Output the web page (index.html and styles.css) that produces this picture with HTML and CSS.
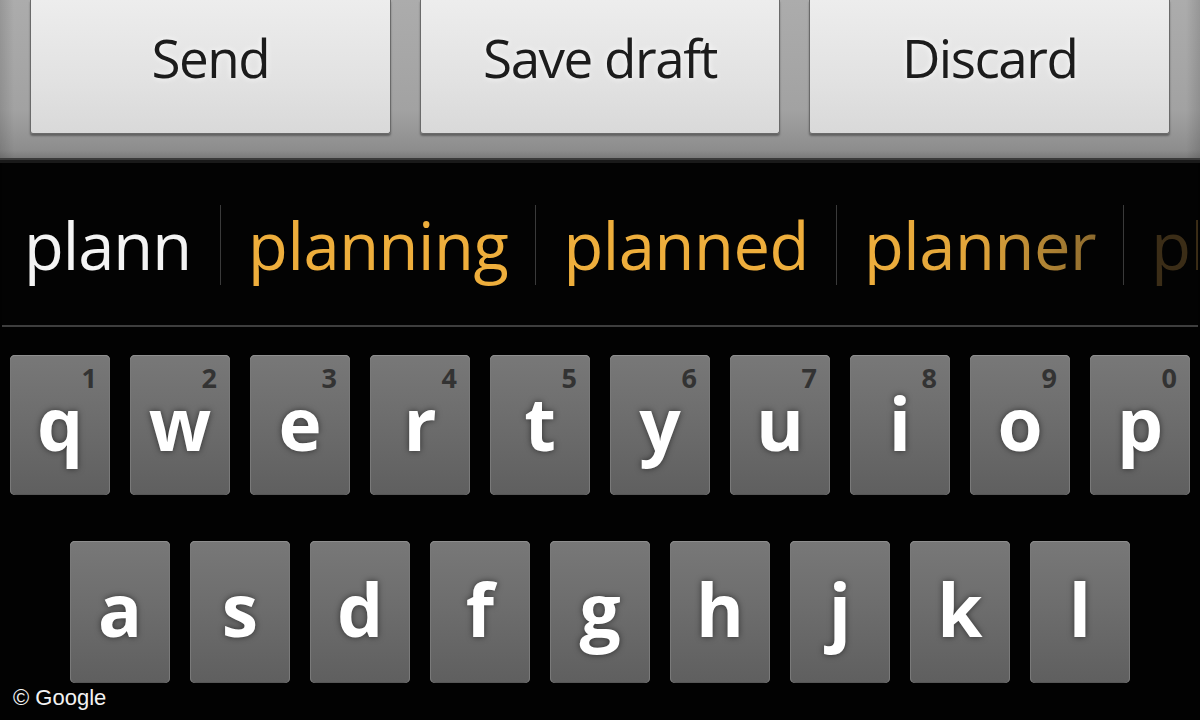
FILE: index.html
```html
<!DOCTYPE html>
<html>
<head>
<meta charset="utf-8">
<link rel="stylesheet" href="styles.css">
</head>
<body>
<div class="screen">
  <div class="actionbar">
    <div class="btn">Send</div>
    <div class="btn">Save draft</div>
    <div class="btn">Discard</div>
  </div>
  <div class="strip">
    <div class="word typed">plann</div>
    <div class="word sugg">planning</div>
    <div class="word sugg">planned</div>
    <div class="word sugg fade">planner</div>
    <div class="word sugg dim">pl</div>
  </div>
  <div class="keyboard">
    <div class="row row1">
      <div class="key"><span class="num">1</span><span class="ch">q</span></div>
      <div class="key"><span class="num">2</span><span class="ch">w</span></div>
      <div class="key"><span class="num">3</span><span class="ch">e</span></div>
      <div class="key"><span class="num">4</span><span class="ch">r</span></div>
      <div class="key"><span class="num">5</span><span class="ch">t</span></div>
      <div class="key"><span class="num">6</span><span class="ch">y</span></div>
      <div class="key"><span class="num">7</span><span class="ch">u</span></div>
      <div class="key"><span class="num">8</span><span class="ch">i</span></div>
      <div class="key"><span class="num">9</span><span class="ch">o</span></div>
      <div class="key"><span class="num">0</span><span class="ch">p</span></div>
    </div>
    <div class="row row2">
      <div class="key"><span class="num"></span><span class="ch">a</span></div>
      <div class="key"><span class="num"></span><span class="ch">s</span></div>
      <div class="key"><span class="num"></span><span class="ch">d</span></div>
      <div class="key"><span class="num"></span><span class="ch">f</span></div>
      <div class="key"><span class="num"></span><span class="ch">g</span></div>
      <div class="key"><span class="num"></span><span class="ch">h</span></div>
      <div class="key"><span class="num"></span><span class="ch">j</span></div>
      <div class="key"><span class="num"></span><span class="ch">k</span></div>
      <div class="key"><span class="num"></span><span class="ch">l</span></div>
    </div>
  </div>
  <div class="credit">© Google</div>
</div>
</body>
</html>
```

FILE: styles.css
```css
* { box-sizing: border-box; }
html, body {
  margin: 0;
  padding: 0;
  background: #000;
}
.screen {
  position: relative;
  width: 1200px;
  height: 720px;
  overflow: hidden;
  background: #020202;
  font-family: "Open Sans", "DejaVu Sans", sans-serif;
}
.actionbar {
  height: 163px;
  display: grid;
  grid-template-columns: repeat(3, 1fr);
  column-gap: 29px;
  padding: 0 30px;
  background: linear-gradient(90deg, rgba(0,0,0,0.12) 0, rgba(0,0,0,0) 14px, rgba(0,0,0,0) 1186px, rgba(0,0,0,0.12) 100%),
              linear-gradient(#acacac 0, #a2a2a2 110px, #8d8d8d 150px, #7a7a7a 158px);
  border-bottom: 3px solid #1a1a1a;
  box-shadow: 0 -2px 0 #3a3a3a inset;
}
.btn {
  height: 134px;
  display: flex;
  align-items: center;
  justify-content: center;
  padding-bottom: 18px;
  background: linear-gradient(#ededed, #e2e2e2 60%, #d9d9d9);
  border: 1px solid #6a6a6a;
  border-top: none;
  border-radius: 0 0 3px 3px;
  box-shadow: 0 2px 2px rgba(0,0,0,0.35);
  color: #1c1c1c;
  font-size: 53px;
  letter-spacing: -1.5px;
  text-shadow: 0 0 6px rgba(255,255,255,0.9);
}
.strip {
  height: 164px;
  display: flex;
  align-items: flex-start;
  padding-top: 42px;
  overflow: hidden;
  white-space: nowrap;
  border-bottom: 2px solid #3e3e3e;
  margin: 0 2px;
  background: #030303;
}
.word {
  height: 80px;
  line-height: 80px;
  font-size: 65px;
  letter-spacing: -0.4px;
  padding: 0 27px;
  border-left: 1px solid #3a3a3a;
  flex: none;
}
.word.typed {
  color: #f4f4f4;
  border-left: none;
  letter-spacing: -1px;
  padding-left: 22px;
  padding-right: 29px;
}
.sugg { color: #eeae3c; }
.sugg.fade {
  background: linear-gradient(90deg, #eeae3c 0, #e0a43a 50%, #8c6a2e 100%);
  -webkit-background-clip: text;
  background-clip: text;
  color: transparent;
  background-origin: content-box;
  background-size: 100% 100%;
  background-repeat: no-repeat;
}
.sugg.dim { color: #3b2d17; }
.keyboard {
  padding-top: 28px;
  display: flex;
  flex-direction: column;
  row-gap: 46px;
}
.row {
  display: flex;
  column-gap: 20px;
}
.row1 { padding-left: 10px; }
.row2 { padding-left: 70px; }
.row2 .key { height: 142px; }
.key {
  width: 100px;
  height: 140px;
  border-radius: 5px;
  background: linear-gradient(#787878, #6c6c6c 50%, #5f5f5f);
  box-shadow: inset 0 1px 0 #8e8e8e, inset 1px 0 0 #7a7a7a, inset -1px 0 0 #7a7a7a, inset 0 -1px 0 #565656;
  display: flex;
  flex-direction: column;
  padding-top: 3px;
}
.num {
  display: block;
  height: 40px;
  line-height: 40px;
  text-align: right;
  padding-right: 13px;
  font-size: 27px;
  font-weight: 700;
  color: #333;
}
.ch {
  display: block;
  height: 52px;
  line-height: 50px;
  text-align: center;
  font-size: 73px;
  font-weight: 700;
  color: #fff;
  text-shadow: 0 0 6px rgba(0,0,0,0.55);
}
.credit {
  position: absolute;
  left: 13px;
  bottom: 9px;
  font-family: "Liberation Sans", Arial, sans-serif;
  font-size: 22px;
  color: #f2f2f2;
}
```
